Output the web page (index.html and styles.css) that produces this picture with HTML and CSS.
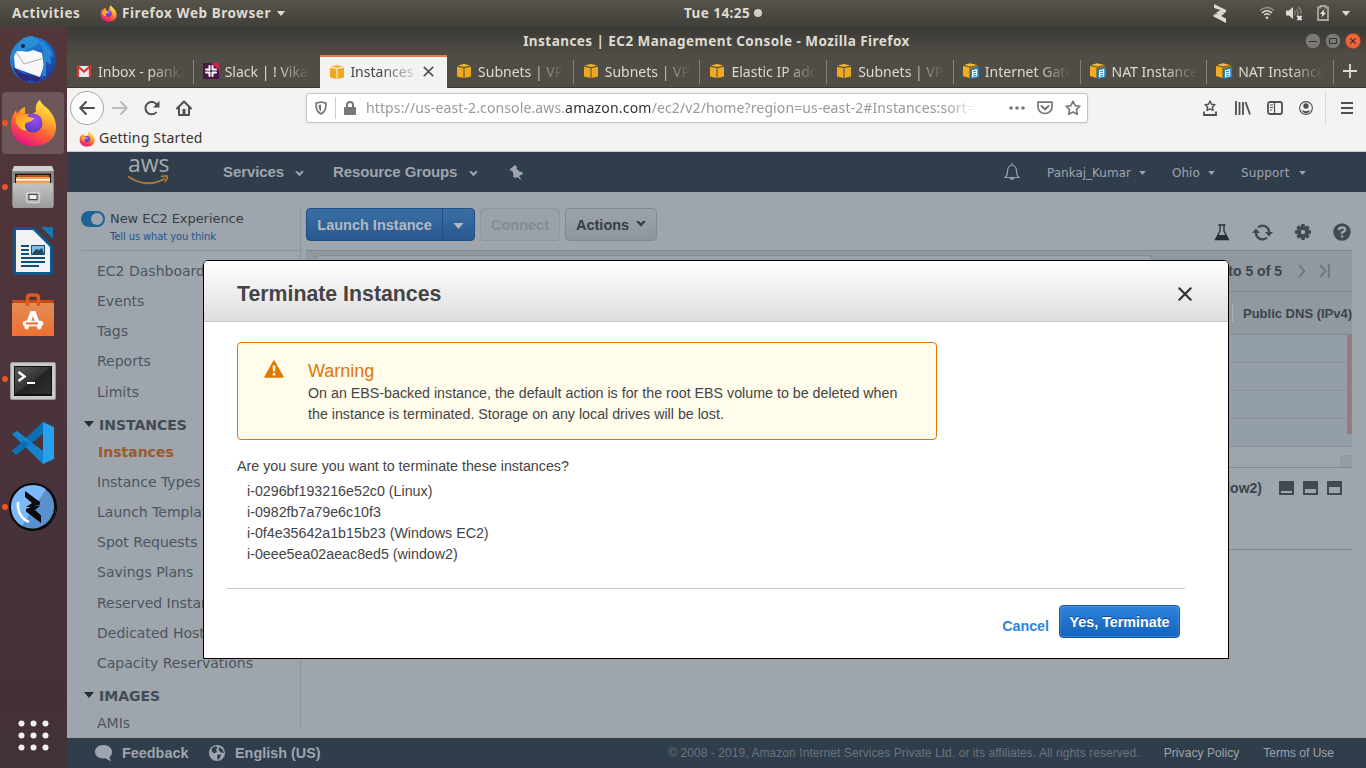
FILE: index.html
```html
<!DOCTYPE html>
<html lang="en">
<head>
<meta charset="utf-8">
<title>Instances | EC2 Management Console</title>
<link rel="stylesheet" href="styles.css">
</head>
<body>
<svg class="defs" width="0" height="0">
  <defs>
    <linearGradient id="ffBody" x1="0.8" y1="0" x2="0.3" y2="1"><stop offset="0" stop-color="#fff44f"/><stop offset="0.35" stop-color="#ffb02e"/><stop offset="0.65" stop-color="#ff5a36"/><stop offset="1" stop-color="#e8108a"/></linearGradient>
    <radialGradient id="ffGlobe" cx="0.6" cy="0.3" r="0.8"><stop offset="0" stop-color="#a04cf5"/><stop offset="1" stop-color="#4a3bb8"/></radialGradient>
    <linearGradient id="ffFlame" x1="0" y1="0" x2="1" y2="1"><stop offset="0" stop-color="#ff9a1f"/><stop offset="1" stop-color="#ffcf3a"/></linearGradient>
    <linearGradient id="tb" x1="0" y1="0" x2="1" y2="1"><stop offset="0" stop-color="#2f9be0"/><stop offset="0.5" stop-color="#1a66c4"/><stop offset="1" stop-color="#22308c"/></linearGradient>
    <linearGradient id="cab" x1="0" y1="0" x2="0" y2="1"><stop offset="0" stop-color="#c4c4c4"/><stop offset="1" stop-color="#9a9a9a"/></linearGradient>
    <linearGradient id="bag" x1="0" y1="0" x2="0" y2="1"><stop offset="0" stop-color="#e28d55"/><stop offset="1" stop-color="#f06f32"/></linearGradient>
    <linearGradient id="term" x1="0" y1="0" x2="1" y2="1"><stop offset="0" stop-color="#5a5a5a"/><stop offset="0.5" stop-color="#333"/><stop offset="0.51" stop-color="#222"/><stop offset="1" stop-color="#303030"/></linearGradient>
    <symbol id="firefox" viewBox="0 0 48 48">
      <path fill="url(#ffBody)" d="M24 47C11 47 2 38 2 26c0-6 2-11 5-15l1 4c2-3 5-6 8-7l0 7 7 0c2-1 4-2 4-3-1-5 1-9 4-11 1 3 3 5 7 8 4 4 9 10 9 19 0 12-10 19-23 19z"/>
      <circle cx="24" cy="24" r="9.5" fill="url(#ffGlobe)"/>
      <path fill="url(#ffFlame)" d="M7 18c4-3 9-3 13 0l5 1c-1 3-5 4-8 5-2 2-1 5 1 8-7-1-13-7-11-14z"/>
    </symbol>
    <symbol id="cube" viewBox="0 0 16 16">
      <path fill="#f0a91f" d="M1 3.800L7.500 5v10L1 13.500z"/><path fill="#f0a91f" d="M15 3.800L8.500 5v10l6.500-1.500z"/><path fill="#f7b52c" d="M1.500 2.400L8 1l6.500 1.400L8 4z"/>
    </symbol>
    <symbol id="vpc" viewBox="0 0 16 16">
      <path fill="#f5ab1c" d="M0 3l6.500 1.200V15L0 13z"/><path fill="#b5770f" d="M7 4.300l8-1.800V4L7 6z"/><path fill="#f8ba35" d="M1 2L7 .2 14.500 2 7 3.600z"/><path fill="#1d87c4" d="M7.500 6.200L16 4v10l-8.500 2z"/><path fill="#fff" d="M9 7.200l5.200-1.300v7.500L9 14.600z"/><path stroke="#1d87c4" stroke-width="1.100" d="M10 8.800l3.200-.8M10 11l3.200-.8M10 13.200l3.200-.8"/>
    </symbol>
    <symbol id="down" viewBox="0 0 10 6"><path d="M0 0h10L5 6z"/></symbol>
    <symbol id="chev" viewBox="0 0 10 7"><path d="M0 1h3l2 2.300L7 1h3L5 6.800z"/></symbol>
  </defs>
</svg>

<header class="topbar">
  <span class="activities">Activities</span>
  <svg class="ff16" width="17" height="17"><use href="#firefox"/></svg>
  <span class="appname">Firefox Web Browser</span>
  <svg class="caret" width="10" height="5"><use href="#down"/></svg>
  <div class="clock"><span>Tue 14:25</span><i></i></div>
  <div class="tray">
    <svg width="13" height="19" viewBox="0 0 13 19" fill="#dfdbd2"><path d="M1 0l12 6v2L6 9.500H2L7.500 6 1 4zM12.500 8.500L8 12l5 2.500V19L.5 12.500v-1.700L6 9.500z"/></svg>
    <svg class="wifi" width="14" height="14" viewBox="0 0 14 14" fill="none" stroke="#dfdbd2" stroke-width="1.500"><path d="M0 4.500Q7-1.500 14 4.500" stroke="#918e86"/><path d="M2 7Q7 2.500 12 7M4.200 9Q7 6.500 9.800 9"/><circle cx="7" cy="11.800" r="1.300" fill="#dfdbd2" stroke="none"/></svg>
    <svg class="vol" width="17" height="15" viewBox="0 0 17 15"><path fill="#dfdbd2" d="M0 4.500h3L7 1v12L3 9.500H0z"/><path d="M8.500 4.500q1.500 2.500 0 5M10.500 3q3 4 0 8M12.500 1q3 3 2.500 7" fill="none" stroke="#8a877f" stroke-width="1.300"/><path stroke="#eee" stroke-width="1.800" d="M11.500 10l4 4m0-4l-4 4"/></svg>
    <svg class="bat" width="12" height="16" viewBox="0 0 12 16"><path d="M1 2.500h2.500V1h5v1.500H11V15H1z" fill="none" stroke="#aaa79f" stroke-width="1.800"/><path fill="#eee" d="M7.500 4L3 9h2.500l-1 3.500L9 7.700H6.500z"/></svg>
    <svg class="caret" width="10" height="5"><use href="#down"/></svg>
  </div>
</header>

<div class="desktop">
  <nav class="dock">
    <div class="tile"><svg width="50" height="50" viewBox="0 0 50 50"><circle cx="25" cy="26" r="23" fill="url(#tb)"/><path fill="#2d2a7c" d="M5 33l9 6 19 5-4 4-9-2-1 2q-10-3-14-15z"/><path fill="#f8f8fa" d="M6 22l4-7q8 5 15 1l9 3 2 13-4 11L7 34z"/><path fill="none" stroke="#aaa" d="M8 18l8 12 20-6"/><path fill="#2a8fd6" d="M8 17Q11 2 24 2q4 0 1 1 8 2 6 6-6 4-13 7-5 2-10 1z"/><circle cx="15" cy="12" r="2" fill="#1b2444"/><path fill="#2486d4" d="M30 6q14 5 15 18l-3-3 1 10-5-4 0 15-4 0 2-15-2-13z"/></svg></div>
    <div class="tile active running"><svg width="48" height="48"><use href="#firefox"/></svg></div>
    <div class="tile running"><svg width="44" height="46" viewBox="0 0 44 46"><path fill="#d0d0d0" d="M3 2h38l2 5H1z"/><path fill="#888" d="M1 7h42v35H1z"/><path fill="#1d1d1d" d="M4 9.500h36V20H4z"/><path fill="#c4501c" d="M6 11l32 0v3H6z"/><path fill="#f4a14c" d="M5 13h34v6H5z"/><path fill="#fff" d="M5 15h34v1.500H5z"/><path fill="url(#cab)" d="M2 19h40v25H2z"/><path fill="#bdbdbd" d="M2 19h40v1.500H2z"/><rect x="15.500" y="28.500" width="13" height="10" rx="2" fill="#aaa" stroke="#d2d2d2" stroke-width="1.500"/><rect x="18" y="30.500" width="8" height="5" fill="#eee" stroke="#444"/></svg></div>
    <div class="tile"><svg width="42" height="50" viewBox="0 0 42 50"><path fill="#0d5789" d="M2 1h20l19 19v27q0 2-2 2H3q-2 0-2-2V3q0-2 1-2z"/><path fill="#f2f2f2" d="M4 4h18l16 16v26H4z"/><path fill="#0d5789" d="M22 1l19 19v4L20 3z"/><path fill="#1577b4" d="M29 1h12v12z"/><path stroke="#0d5078" stroke-width="2" d="M9 20h8M9 24h8M9 28h8M9 32h24M9 36h24M9 40h18"/><path fill="#7dbde8" d="M19 19h14v10H19z"/><path fill="#264a5a" d="M20 28l4-5 3 1 3-2 2 6z"/><path fill="none" stroke="#0d5078" d="M19.500 19.500h13v9h-13z"/></svg></div>
    <div class="tile"><svg width="44" height="46" viewBox="0 0 44 46"><path fill="#c94c16" d="M1 8h42l-2 5H3z"/><path fill="url(#bag)" d="M1 11h42v33H1z"/><path fill="none" stroke="#d95a22" stroke-width="3.500" d="M16.500 14V6q0-3 3-3h5q3 0 3 3v8"/><path fill="none" stroke="#fff" stroke-width="4" d="M15 37l6-16h2l6 16"/><path stroke="#fff" stroke-width="5.500" stroke-linecap="round" d="M14.500 31.500h15"/><path stroke="#ef6a2d" stroke-width="2" d="M15 31.500h12"/></svg></div>
    <div class="tile running"><svg class="term-ic" width="46" height="40" viewBox="0 0 46 40"><rect x=".5" y="1.500" width="45" height="37" rx="1.500" fill="#c9c9c9" stroke="#999"/><path fill="#111" d="M4 5h38v30H4z"/><path fill="url(#term)" d="M5 6h36v27H5z"/><path fill="none" stroke="#fff" stroke-width="2.500" d="M8.500 11l6 4.500-6 4.500"/><path stroke="#fff" stroke-width="2" d="M17 22h8"/></svg></div>
    <div class="tile"><svg width="44" height="44" viewBox="0 0 44 44"><path fill="#0a6fb4" d="M5 34l-4-4 31-29v12z"/><path fill="#1583cf" d="M1 13l5-3 26 20v13z"/><path fill="#0a6fb4" d="M5 34l-4-4 12-11 5 4z"/><path fill="#27a1ef" d="M32 1l11 5v32l-11 5z"/></svg></div>
    <div class="tile running"><svg width="48" height="48" viewBox="0 0 48 48"><circle cx="24" cy="24" r="23" fill="#7cb9f8" stroke="#0a0a0a" stroke-width="2"/><path fill="#5990cd" d="M37 6a22 22 0 0 1-24 37z"/><path fill="none" stroke="#0a0a0a" stroke-width="2" d="M37 5.200A23 23 0 0 1 13 44.200"/><path fill="#0a0a0a" d="M16 8l15 11v2.500L22 24h-5l6-4-7-6zM31.500 22.500L26 27l6 5.500V40L17 28.500V26l6-2.500z"/><path fill="none" stroke="#fff" stroke-width="2.500" d="M9 19q-1 15 11 20"/></svg></div>
    <svg class="apps" width="31" height="31" viewBox="0 0 31 31" fill="#f3f1f0"><circle cx="3.500" cy="3.500" r="3"/><circle cx="15.500" cy="3.500" r="3"/><circle cx="27.500" cy="3.500" r="3"/><circle cx="3.500" cy="15.500" r="3"/><circle cx="15.500" cy="15.500" r="3"/><circle cx="27.500" cy="15.500" r="3"/><circle cx="3.500" cy="27.500" r="3"/><circle cx="15.500" cy="27.500" r="3"/><circle cx="27.500" cy="27.500" r="3"/></svg>
  </nav>

  <main class="window">
    <div class="titlebar">
      <span>Instances | EC2 Management Console - Mozilla Firefox</span>
      <div class="winbtns">
        <svg width="16" height="16" viewBox="0 0 16 16"><circle cx="8" cy="8" r="7.700" fill="#7b7973" stroke="#34332e" stroke-width=".6"/><path stroke="#33322d" d="M4 8.500h8"/></svg>
        <svg width="16" height="16" viewBox="0 0 16 16"><circle cx="8" cy="8" r="7.700" fill="#7b7973" stroke="#34332e" stroke-width=".6"/><path fill="none" stroke="#33322d" d="M4.500 5.500h7v5h-7z"/></svg>
        <svg width="16" height="16" viewBox="0 0 16 16"><circle cx="8" cy="8" r="7.700" fill="#ec6439" stroke="#7e3a22" stroke-width=".6"/><path stroke="#33322d" stroke-width="1.200" d="M5.300 5.300l5.400 5.400m0-5.400l-5.400 5.400"/></svg>
      </div>
    </div>

    <div class="tabs">
      <div class="tab"><svg width="16" height="16" viewBox="0 0 16 16"><path fill="#e8e8e8" d="M1 3h14v11H1z"/><path fill="none" stroke="#d5372b" stroke-width="2.200" d="M2 14V3.500l6 5 6-5V14"/></svg><span>Inbox - pankaj</span></div>
      <div class="tab nosep"><svg width="16" height="16" viewBox="0 0 16 16"><path fill="#4a154b" d="M0 0h16v16H0z"/><path fill="#d3224f" d="M8 0h8v7z"/><path stroke="#fff" stroke-width="2" stroke-linecap="round" d="M6.500 3v4M3 6.500h2M9.500 3v3M9.500 6.500H13M6.500 9.500v3.500M3 9.500h3.500M9.500 9.500V13M10 9.500h3"/></svg><span>Slack | ! Vikash</span></div>
      <div class="tab current"><svg width="16" height="16"><use href="#cube"/></svg><span>Instances |</span><svg class="x" width="11" height="11" viewBox="0 0 11 11"><path stroke="#555" stroke-width="1.700" d="M.8.8l9.400 9.400m0-9.400L.8 10.200"/></svg></div>
      <div class="tab"><svg width="16" height="16"><use href="#cube"/></svg><span>Subnets | VPC M</span></div>
      <div class="tab"><svg width="16" height="16"><use href="#cube"/></svg><span>Subnets | VPC M</span></div>
      <div class="tab"><svg width="16" height="16"><use href="#cube"/></svg><span>Elastic IP addre</span></div>
      <div class="tab"><svg width="16" height="16"><use href="#cube"/></svg><span>Subnets | VPC M</span></div>
      <div class="tab"><svg width="16" height="16"><use href="#vpc"/></svg><span>Internet Gatew</span></div>
      <div class="tab"><svg width="16" height="16"><use href="#vpc"/></svg><span>NAT Instances</span></div>
      <div class="tab"><svg width="16" height="16"><use href="#vpc"/></svg><span>NAT Instances</span></div>
      <svg class="plus" width="14" height="14" viewBox="0 0 14 14"><path stroke="#dfdbd2" stroke-width="1.800" d="M7 0v14M0 7h14"/></svg>
    </div>

    <div class="navbar">
      <div class="back"><svg width="16" height="14" viewBox="0 0 16 14" fill="none" stroke="#4f4f4f" stroke-width="2" stroke-linecap="round" stroke-linejoin="round"><path d="M15 7H1.500M7 1L1.200 7 7 13"/></svg></div>
      <svg class="fwd" width="16" height="14" viewBox="0 0 16 14" fill="none" stroke="#bbb" stroke-width="2" stroke-linecap="round" stroke-linejoin="round"><path d="M1 7h13.500M9 1l5.800 6L9 13"/></svg>
      <svg class="reload" width="16" height="16" viewBox="0 0 16 16"><path d="M12.500 12A6.200 6.200 0 1 1 13 5" fill="none" stroke="#4f4f4f" stroke-width="2"/><path fill="#4f4f4f" d="M15.500.8V7.500H9z"/></svg>
      <svg class="home" width="16" height="16" viewBox="0 0 16 16"><path d="M1 8.500L8 1.500l7 7M3 8v7h10V8" fill="none" stroke="#4f4f4f" stroke-width="2" stroke-linejoin="round" stroke-linecap="round"/><path fill="#4f4f4f" d="M6.500 9h3v6h-3z"/></svg>
      <div class="url">
        <svg class="shield" width="12" height="14" viewBox="0 0 12 14"><path d="M6 1l5 1.200c0 5-.5 8.500-5 10.800C1.500 10.700 1 7.200 1 2.200z" fill="none" stroke="#777" stroke-width="1.700"/><path fill="#777" d="M6 3.500v7C4 9 3.500 7 3.500 4z"/></svg>
        <i></i>
        <svg width="12" height="14" viewBox="0 0 12 14"><path d="M3 7V4a3 3 0 0 1 6 0v3" fill="none" stroke="#777" stroke-width="2"/><rect y="6" width="12" height="8" rx="1" fill="#777"/></svg>
        <span class="addr">https://us-east-2.console.aws.<b>amazon.com</b>/ec2/v2/home?region=us-east-2#Instances:sort=</span>
        <svg class="dots" width="16" height="4" viewBox="0 0 16 4" fill="#777"><circle cx="2" cy="2" r="1.800"/><circle cx="8" cy="2" r="1.800"/><circle cx="14" cy="2" r="1.800"/></svg>
        <svg class="pocket" width="16" height="14" viewBox="0 0 16 14" fill="none" stroke="#777" stroke-width="1.700"><path d="M1 1.200h14V6a7 6.500 0 0 1-14 0z" stroke-linejoin="round"/><path d="M4.500 5L8 8.300 11.500 5" stroke-width="2" stroke-linecap="round"/></svg>
        <svg width="16" height="16" viewBox="0 0 16 16"><path fill="none" stroke="#777" stroke-width="1.600" stroke-linejoin="round" d="M8 1.200l2.100 4.400 4.800.6-3.500 3.300.9 4.800L8 12l-4.300 2.300.9-4.800L1.100 6.200l4.800-.6z"/></svg>
      </div>
      <div class="tools">
        <svg width="14" height="16" viewBox="0 0 14 16" fill="none" stroke="#4f4f4f"><path stroke-width="1.400" stroke-linejoin="round" d="M7 1l1.500 3.200 3.500.4-2.600 2.400.7 3.500L7 8.800l-3.100 1.700.7-3.500L2 4.600l3.500-.4z"/><path stroke-width="1.800" d="M1 11.500V15h12v-3.500"/></svg>
        <svg width="16" height="14" viewBox="0 0 16 14" stroke="#4f4f4f" stroke-width="1.800"><path d="M1 0v14M4.500 1v13M8 1v13M10.500 1L15 13.500"/></svg>
        <svg width="16" height="14" viewBox="0 0 16 14" fill="none" stroke="#4f4f4f"><rect x="1" y="1" width="14" height="12" rx="2" stroke-width="1.800"/><path stroke-width="1.200" d="M7.500 1v12M3 4h3M3 6.500h3M3 9h2"/></svg>
        <svg width="14" height="14" viewBox="0 0 14 14"><circle cx="7" cy="7" r="6.400" fill="none" stroke="#4f4f4f" stroke-width="1.100"/><circle cx="7" cy="5" r="2.700" fill="#4f4f4f"/><path fill="#4f4f4f" d="M2.500 9.500h2Q7 11 9.500 9.500h2Q7 15 2.500 9.500z"/></svg>
        <i></i>
        <svg width="12" height="12" viewBox="0 0 12 12" stroke="#4f4f4f" stroke-width="2"><path d="M0 1h12M0 6h12M0 11h12"/></svg>
      </div>
    </div>
    <div class="bookmarks"><svg width="16" height="16"><use href="#firefox"/></svg><span>Getting Started</span></div>

    <section class="aws">
      <header class="awsbar">
        <div class="logo"><span>aws</span><svg width="42" height="11" viewBox="0 0 42 11"><path d="M1 1.500Q20 14 38 3.500" fill="none" stroke="#ab7a35" stroke-width="2"/><path d="M34 1.500q7-1.500 6.500.5T38 7" fill="none" stroke="#ab7a35" stroke-width="1.600"/></svg></div>
        <span class="m1">Services</span><svg class="c1" width="9" height="7"><use href="#chev"/></svg>
        <span class="m2">Resource Groups</span><svg class="c1" width="9" height="7"><use href="#chev"/></svg>
        <svg class="pin" width="14" height="15" viewBox="0 0 14 15"><path fill="#9fa5ac" d="M1 4l5-4 2 2-.5 1.500L11 7l2-.5 1 2.500-4 2 2 3-.6.600-2.900-2.600L6 13l-2-1.500L4.500 9 3 5.500 1.500 6z"/></svg>
        <svg class="bell" width="16" height="18" viewBox="0 0 16 18"><path fill="none" stroke="#98a0a8" stroke-width="1.200" d="M1 14.500q2.500-2 2.500-6Q3.500 2.500 8 2.500t4.500 6q0 4 2.500 6zM8 0v2.500"/><path fill="#98a0a8" d="M5.500 15h5q-2.500 4-5 0z"/></svg>
        <span class="u">Pankaj_Kumar</span><svg class="c2" width="7" height="4"><use href="#down"/></svg>
        <span class="u o">Ohio</span><svg class="c2" width="7" height="4"><use href="#down"/></svg>
        <span class="u s">Support</span><svg class="c2" width="7" height="4"><use href="#down"/></svg>
      </header>

      <div class="page">
        <aside class="side">
          <div class="exp">
            <div class="toggle"><i></i></div>
            <div><div class="t1">New EC2 Experience</div><div class="t2">Tell us what you think</div></div>
          </div>
          <ul>
            <li>EC2 Dashboard</li><li>Events</li><li>Tags</li><li>Reports</li><li>Limits</li>
            <li class="head"><svg width="10" height="8"><use href="#down"/></svg>INSTANCES</li>
            <li class="sel">Instances</li><li>Instance Types</li><li>Launch Templates</li><li>Spot Requests</li><li>Savings Plans</li><li>Reserved Instances</li><li>Dedicated Hosts</li><li>Capacity Reservations</li>
            <li class="head"><svg width="10" height="8"><use href="#down"/></svg>IMAGES</li>
            <li>AMIs</li>
          </ul>
        </aside>

        <div class="content">
          <div class="actions">
            <div class="btn blue"><span>Launch Instance</span><em><svg width="11" height="6"><use href="#down"/></svg></em></div>
            <div class="btn off">Connect</div>
            <div class="btn act">Actions<svg width="10" height="7"><use href="#chev"/></svg></div>
            <div class="icons">
              <svg width="16" height="17" viewBox="0 0 16 17"><path fill="none" stroke="#252c36" stroke-width="1.300" d="M4.500 1h7M6 1v6L1.500 15.500h13L10 7V1"/><path fill="#252c36" d="M4 11h8l3 5H1z"/></svg>
              <svg width="21" height="17" viewBox="0 0 21 17"><path fill="none" stroke="#424951" stroke-width="2.400" d="M6 3.500a6.500 6.500 0 0 1 11 4.500M15 13.500A6.500 6.500 0 0 1 4 9"/><path fill="#424951" d="M13 8h8l-4 4.500zM0 9h8L4 4.500z"/></svg>
              <svg width="16" height="16" viewBox="0 0 16 16"><path fill="none" stroke="#424951" stroke-width="3.500" d="M8 0v16M0 8h16M2.500 2.500l11 11m0-11l-11 11"/><circle cx="8" cy="8" r="4.200" fill="#9ea5ac" stroke="#424951" stroke-width="4"/></svg>
              <svg width="18" height="18" viewBox="0 0 18 18"><circle cx="9" cy="9" r="8.700" fill="#424951"/><path fill="none" stroke="#9ea5ac" stroke-width="2.300" d="M5.800 7.200Q5.800 4.500 9 4.500t3.200 2.300Q12.200 8.300 9 9.500V11"/><path fill="#9ea5ac" d="M7.800 12.200h2.400v2.300H7.800z"/></svg>
            </div>
          </div>
          <div class="filter"><div class="box"></div><div class="pager">1 to 5 of 5<svg width="8" height="14" viewBox="0 0 8 14"><path fill="none" stroke="#727981" stroke-width="2" d="M1 1l5.500 6L1 13"/></svg><svg width="11" height="14" viewBox="0 0 11 14"><path fill="none" stroke="#727981" stroke-width="2" d="M1 1l5.500 6L1 13M10 0v14"/></svg></div></div>
          <div class="thead"><i></i><span>Public DNS (IPv4)</span></div>
          <div class="rows"><div></div><div></div><div></div><div></div><i class="scroll"></i></div>
          <div class="under"><i></i></div>
          <div class="pane"><span>(window2)</span>
            <svg width="15" height="14" viewBox="0 0 15 14"><path fill="#424951" d="M0 0h15v14H0z"/><path fill="#9ea5ac" d="M2 10h11v2H2z"/></svg>
            <svg width="15" height="14" viewBox="0 0 15 14"><path fill="#424951" d="M0 0h15v14H0z"/><path fill="#9ea5ac" d="M2 8h11v4H2z"/></svg>
            <svg width="15" height="14" viewBox="0 0 15 14"><path fill="#424951" d="M0 0h15v14H0z"/><path fill="#9ea5ac" d="M2 6h11v6H2z"/></svg>
          </div>
        </div>
      </div>

      <footer class="foot">
        <svg width="18" height="17" viewBox="0 0 18 17"><path fill="#9fa5ac" d="M8.500 0C13.500 0 17 2.800 17 6.800c0 2.400-1 4.200-2.600 5.400L16 16.500l-5.500-3.200C4.500 14 0 11.500 0 6.800 0 2.800 3.500 0 8.500 0z"/></svg>
        <b class="fb">Feedback</b>
        <svg width="16" height="16" viewBox="0 0 16 16"><circle cx="8" cy="8" r="8" fill="#9fa5ac"/><path fill="#303d4b" d="M3 3l4-2 1.500 2L7 4.500 8 7 5 8.500 2.500 6zM10 2l3.500 2.500L15 8l-3-.5L9.500 5zM8 10l4-1-1 4-2.500 2z"/></svg>
        <b class="lang">English (US)</b>
        <span class="copy">© 2008 - 2019, Amazon Internet Services Private Ltd. or its affiliates. All rights reserved.</span>
        <span class="pp">Privacy Policy</span><span class="tu">Terms of Use</span>
      </footer>
    </section>

    <div class="modal">
      <div class="mhead"><h1>Terminate Instances</h1><svg width="14" height="14" viewBox="0 0 14 14"><path stroke="#333" stroke-width="2.200" stroke-linecap="round" d="M1.300 1.300l11.400 11.400m0-11.400L1.300 12.700"/></svg></div>
      <div class="mbody">
        <div class="warn">
          <svg width="20" height="18" viewBox="0 0 20 18"><path fill="#e07700" stroke="#e07700" stroke-width="1.500" stroke-linejoin="round" d="M10 1l9 16H1z"/><path fill="#fffcec" d="M8.500 5.500h3L11 11.500H9zM8.700 13h2.600v2.500H8.700z"/></svg>
          <div><h2>Warning</h2><p>On an EBS-backed instance, the default action is for the root EBS volume to be deleted when<br>the instance is terminated. Storage on any local drives will be lost.</p></div>
        </div>
        <p class="sure">Are you sure you want to terminate these instances?</p>
        <ul class="ids"><li>i-0296bf193216e52c0 (Linux)</li><li>i-0982fb7a79e6c10f3</li><li>i-0f4e35642a1b15b23 (Windows EC2)</li><li>i-0eee5ea02aeac8ed5 (window2)</li></ul>
      </div>
      <div class="mfoot"><a>Cancel</a><div class="btn yes">Yes, Terminate</div></div>
    </div>
  </main>
</div>
</body>
</html>
```
FILE: styles.css
```css
* { box-sizing: border-box; }
body { margin: 0; width: 1366px; height: 768px; overflow: hidden; display: flex; flex-direction: column; font-family: "Liberation Sans", Arial, sans-serif; }
.defs { position: absolute; }
svg { flex: none; display: block; }
span, b, div { white-space: nowrap; }
ul { list-style: none; margin: 0; padding: 0; }

.topbar { height: 27px; flex: none; display: flex; align-items: center; padding: 0 0 1px 12px; background: linear-gradient(#57534a, #403f39); color: #dfdbd2; font: bold 13.500px "Noto Sans", sans-serif; letter-spacing: .57px; }
.activities { width: 68px; }
.ff16 { margin: 0 5px 0 20px; }
.appname { width: 149px; }
.caret { fill: #dfdbd2; margin-left: 5px; }
.clock { margin-left: 398px; display: flex; align-items: center; gap: 5px; letter-spacing: .45px; }
.clock span { width: 65px; }
.clock i { width: 8px; height: 8px; border-radius: 50%; background: #d3cfc7; }
.tray { margin-left: auto; display: flex; align-items: center; padding-right: 15px; }
.tray .wifi { margin-left: 34px; }
.tray .vol { margin-left: 12px; }
.tray .bat { margin-left: 14px; }
.tray .caret { margin-left: 12px; }

.desktop { flex: 1; display: flex; min-height: 0; }
.dock { width: 67px; flex: none; padding: 1px 3px 0 2px; display: flex; flex-direction: column; gap: 2px; background: linear-gradient(#53373a, #4a333b 55%, #443037 88%, #423336); }
.tile { position: relative; height: 62px; flex: none; display: flex; align-items: center; justify-content: center; border-radius: 4px; }
.tile.active { background: #6e5759; }
.tile.running::before { content: ""; position: absolute; left: 0; top: 28px; width: 6px; height: 6px; border-radius: 50%; background: #e95420; }
.term-ic { margin-top: 4px; }
.apps { margin: 180px 0 0 15.500px; }

.window { position: relative; flex: 1; display: flex; flex-direction: column; min-width: 0; }
.titlebar { height: 28px; flex: none; display: flex; align-items: center; justify-content: center; background: linear-gradient(#3a3934, #504d46); color: #dfdbd2; font: bold 13.500px "Noto Sans", sans-serif; letter-spacing: .45px; }
.winbtns { position: absolute; right: 5px; top: 6px; display: flex; gap: 4px; }
.tabs { height: 33px; flex: none; display: flex; background: #504d46; border-bottom: 1px solid #3a3934; }
.tab { position: relative; width: 126.700px; flex: none; display: flex; align-items: center; padding-left: 9px; color: #dfdbd2; font: 14px "Noto Sans", sans-serif; }
.tab::after { content: ""; position: absolute; right: 0; top: 5px; width: 1px; height: 24px; background: #85827a; }
.tab.nosep::after, .tab.current::after { display: none; }
.tab > span { margin-left: 6px; width: 86px; overflow: hidden; -webkit-mask-image: linear-gradient(90deg, #000 52px, transparent 86px); mask-image: linear-gradient(90deg, #000 52px, transparent 86px); }
.tab.current { height: 34px; padding-bottom: 3px; background: #f4f3f2; color: #444; border-top: 2px solid #f07746; }
.tab.current > span { margin-left: 5px; width: 66px; -webkit-mask-image: linear-gradient(90deg, #000 30px, transparent 72px); mask-image: linear-gradient(90deg, #000 30px, transparent 72px); }
.tab .x { margin-left: 7px; }
.plus { margin: 9px 0 0 9px; }

.navbar { height: 39px; flex: none; display: flex; align-items: center; background: #f4f3f2; }
.back { width: 34px; height: 34px; margin-left: 3px; border: 1px solid #a8a8a8; border-radius: 50%; background: #fcfcfc; display: flex; align-items: center; justify-content: center; }
.fwd { margin-left: 8px; } .reload { margin-left: 16px; } .home { margin-left: 16px; }
.url { margin-left: 114px; width: 782px; height: 30px; padding: 0 6px 0 9px; border: 1px solid #c3c3c3; border-radius: 3px; background: #fff; display: flex; align-items: center; box-shadow: 0 1px 3px #0001; }
.shield { margin-left: -1px; }
.url i { width: 1px; height: 22px; background: #ccc; margin: 0 8px; }
.addr { margin-left: 10px; width: 608px; overflow: hidden; color: #999; font: 14px "Noto Sans", sans-serif; letter-spacing: .12px; -webkit-mask-image: linear-gradient(90deg, #000 580px, transparent 610px); mask-image: linear-gradient(90deg, #000 580px, transparent 610px); }
.addr b { font-weight: normal; color: #333; letter-spacing: .2px; }
.dots { margin-left: 35px; } .pocket { margin: 0 12px; }
.tools { flex: 1; display: flex; align-items: center; gap: 17px; margin-left: 115px; }
.tools svg:nth-of-type(2) { margin-left: 1px; }
.tools svg:nth-of-type(3), .tools svg:nth-of-type(4) { margin-left: -1px; }
.tools i { width: 1px; height: 34px; background: #d7d6d5; margin: 0 -2px 0 -5px; }
.bookmarks { height: 25px; flex: none; display: flex; align-items: center; gap: 4px; padding: 0 0 1px 12px; background: #f4f3f2; border-bottom: 1px solid #c9c9c9; color: #333; font: 14px/20px "Noto Sans", sans-serif; letter-spacing: .2px; }
.bookmarks span { margin-top: -1px; }

.aws { flex: 1; display: flex; flex-direction: column; min-height: 0; background: #9ea5ac; }
.awsbar { height: 40px; flex: none; display: flex; align-items: center; background: #303d4b; color: #9fa5ac; font-weight: bold; font-size: 15px; letter-spacing: -.1px; }
.logo { width: 42px; margin-left: 60px; display: flex; flex-direction: column; }
.logo span { font: 23px/22px "Open Sans", sans-serif; color: #a5abb1; margin: -6px 0 1px 1px; }
.m1, .m2 { padding-bottom: 2px; }
.m1 { margin-left: 54px; width: 62px; } .m2 { margin-left: 29px; width: 126px; }
.c1 { fill: #9fa5ac; margin: 2px 0 0 10px; }
.pin { margin-left: 31px; }
.bell { margin-left: 481px; }
.u { font: 12px "DejaVu Sans", sans-serif; letter-spacing: 0; margin-left: 27px; width: 84px; padding-top: 2px; }
.u.o { margin-left: 26px; width: 28px; } .u.s { width: 50px; margin-left: 26px; letter-spacing: .15px; }
.c2 { fill: #9fa5ac; margin-left: 8px; margin-top: 1px; }

.page { flex: 1; display: flex; min-height: 0; }
.side { width: 220px; margin: 16px 0 10px 14px; border-right: 1px solid #8b9299; font-family: "DejaVu Sans", sans-serif; color: #444e58; overflow: hidden; }
.exp { display: flex; height: 43px; border-bottom: 1px solid #8b9299; }
.toggle { width: 24px; height: 16px; margin: 3px 5px 0 0; border-radius: 8px; background: #1f6394; padding: 2px 2px 2px 10px; }
.toggle i { display: block; width: 12px; height: 12px; border-radius: 50%; background: #9ea5ac; }
.t1 { padding-top: 1px; font-size: 13px; line-height: 20px; letter-spacing: -.06px; color: #373e46; }
.t2 { font-size: 10px; line-height: 15px; letter-spacing: -.12px; color: #23548f; }
.side ul { padding-top: 5px; }
.side li { height: 30.150px; line-height: 30.500px; padding-left: 16px; font-size: 14px; white-space: nowrap; color: #4c555f; }
.side .head { padding: 7px 0 0 3px; display: flex; align-items: center; gap: 5px; font-weight: bold; color: #424b55; }
.side .head svg { fill: #252c36; margin-top: -3px; }
.side .sel { color: #9a5a2b; font-weight: bold; padding-left: 17px; }

.content { width: 1046px; margin: 16px 0 0 5px; }
.actions { height: 42px; display: flex; align-items: flex-start; }
.btn { height: 33px; border: 1px solid #82898f; border-radius: 4px; display: flex; align-items: center; font-weight: bold; font-size: 14.500px; }
.blue { width: 169px; background: linear-gradient(#3b6fa4, #28598e); border-color: #1f4f85; color: #b3b9c0; }
.blue span { width: 135px; text-align: center; }
.blue em { flex: 1; height: 31px; display: flex; align-items: center; justify-content: center; border-left: 1px solid #1f4f85; }
.blue svg { fill: #b3b9c0; margin-left: -1px; margin-top: 3px; }
.off { width: 80px; margin-left: 5px; justify-content: center; color: #858c93; border-color: #8f969d; background: #9aa1a8; }
.act { width: 92px; margin-left: 5px; padding-left: 10px; gap: 7px; color: #363d45; background: linear-gradient(#9ca3aa, #8e959c); }
.act svg { fill: #363d45; margin-top: -2px; }
.icons { flex: 1; display: flex; align-items: center; justify-content: flex-end; gap: 22px; padding: 15px 1px 0 0; }
.filter { height: 41px; display: flex; border: solid #81888f; border-width: 1px 0 0; background: #91989f; }
.box { width: 836px; height: 32px; margin: 4px 0 0 10px; border: 1px solid #858c93; border-radius: 4px; background: #9ba2a9; }
.pager { flex: 1; display: flex; align-items: center; justify-content: flex-end; gap: 13px; padding-right: 22px; color: #3d444c; font-weight: bold; font-size: 14px; }
.pager svg:first-of-type { margin-left: 3px; }
.thead { height: 44px; display: flex; align-items: center; justify-content: flex-end; gap: 10px; overflow: hidden; border: solid #7f868d; border-width: 1px 0; background: #91989f; color: #3d444c; font-weight: bold; font-size: 13px; }
.thead i { width: 1px; height: 18px; background: #a9b0b6; }
.thead span { width: 109px; overflow: hidden; }
.rows { position: relative; height: 112px; background: #949eab; }
.rows div { height: 28px; border-bottom: 1px solid #899198; }
.scroll { position: absolute; right: 0; top: 0; width: 5px; height: 99px; background: #957d79; }
.under { height: 21px; padding-top: 8px; border-bottom: 1px solid #81888f; display: flex; justify-content: flex-end; }
.under i { width: 12px; height: 12px; background: #949ba2; }
.pane { height: 82px; border-bottom: 1px solid #81888f; display: flex; justify-content: flex-end; align-items: flex-start; padding: 13px 10px 0 0; gap: 9px; color: #3d444c; font-weight: bold; font-size: 14px; }
.pane span { margin: -2px 8px 0 0; line-height: 18px; }

.foot { height: 30px; flex: none; display: flex; align-items: center; padding-left: 28px; background: #303d4b; color: #9fa5ac; font-size: 12px; }
.foot b { font-size: 14.400px; }
.fb { margin: 0 20px 0 9px; width: 67px; } .lang { margin-left: 10px; }
.copy { margin-left: auto; color: #6a747d; letter-spacing: .065px; }
.pp { margin-left: 24px; letter-spacing: .065px; } .tu { margin: 0 32px 0 24px; }

.modal { position: absolute; left: 136px; top: 233px; width: 1026px; height: 399px; background: #fff; border: 1px solid #000; border-radius: 5px 5px 0 0; color: #444; font-size: 14.250px; display: flex; flex-direction: column; }
.mhead { height: 61px; display: flex; align-items: center; justify-content: space-between; padding: 6px 36px 0 33px; background: linear-gradient(#fff, #dedede); border-bottom: 1px solid #c6c6c6; border-radius: 4px 4px 0 0; color: #444; }
.mhead h1 { margin: 0; font-size: 21.300px; }
.mbody { flex: 1; padding: 20px 0 0 33px; }
.warn { width: 700px; height: 98px; border: 1px solid #dd7600; border-radius: 4px; background: #fffcec; display: flex; gap: 24px; padding: 17px 0 0 26px; }
.warn h2 { margin: 0; font-size: 18px; font-weight: normal; line-height: 22px; color: #e07700; }
.warn p { margin: 1px 0 0; line-height: 21px; }
.sure { margin: 16px 0 0; line-height: 21px; }
.ids { margin: 4px 0 0 10px; line-height: 21px; }
.mfoot { width: 958px; height: 70px; margin-left: 23px; border-top: 1px solid #c8c8c8; display: flex; justify-content: flex-end; padding: 16px 5px 0 0; gap: 10px; font-weight: bold; }
.mfoot a { line-height: 42px; height: 42px; color: #2d85e0; }
.yes { width: 121px; justify-content: center; color: #fff; border-color: #1459ae; background: linear-gradient(#2f82dc, #1263bd); font-size: 14.300px; box-shadow: inset 0 0 2px #7db4ee; text-shadow: 0 -1px 0 #0a4a90; }
```
